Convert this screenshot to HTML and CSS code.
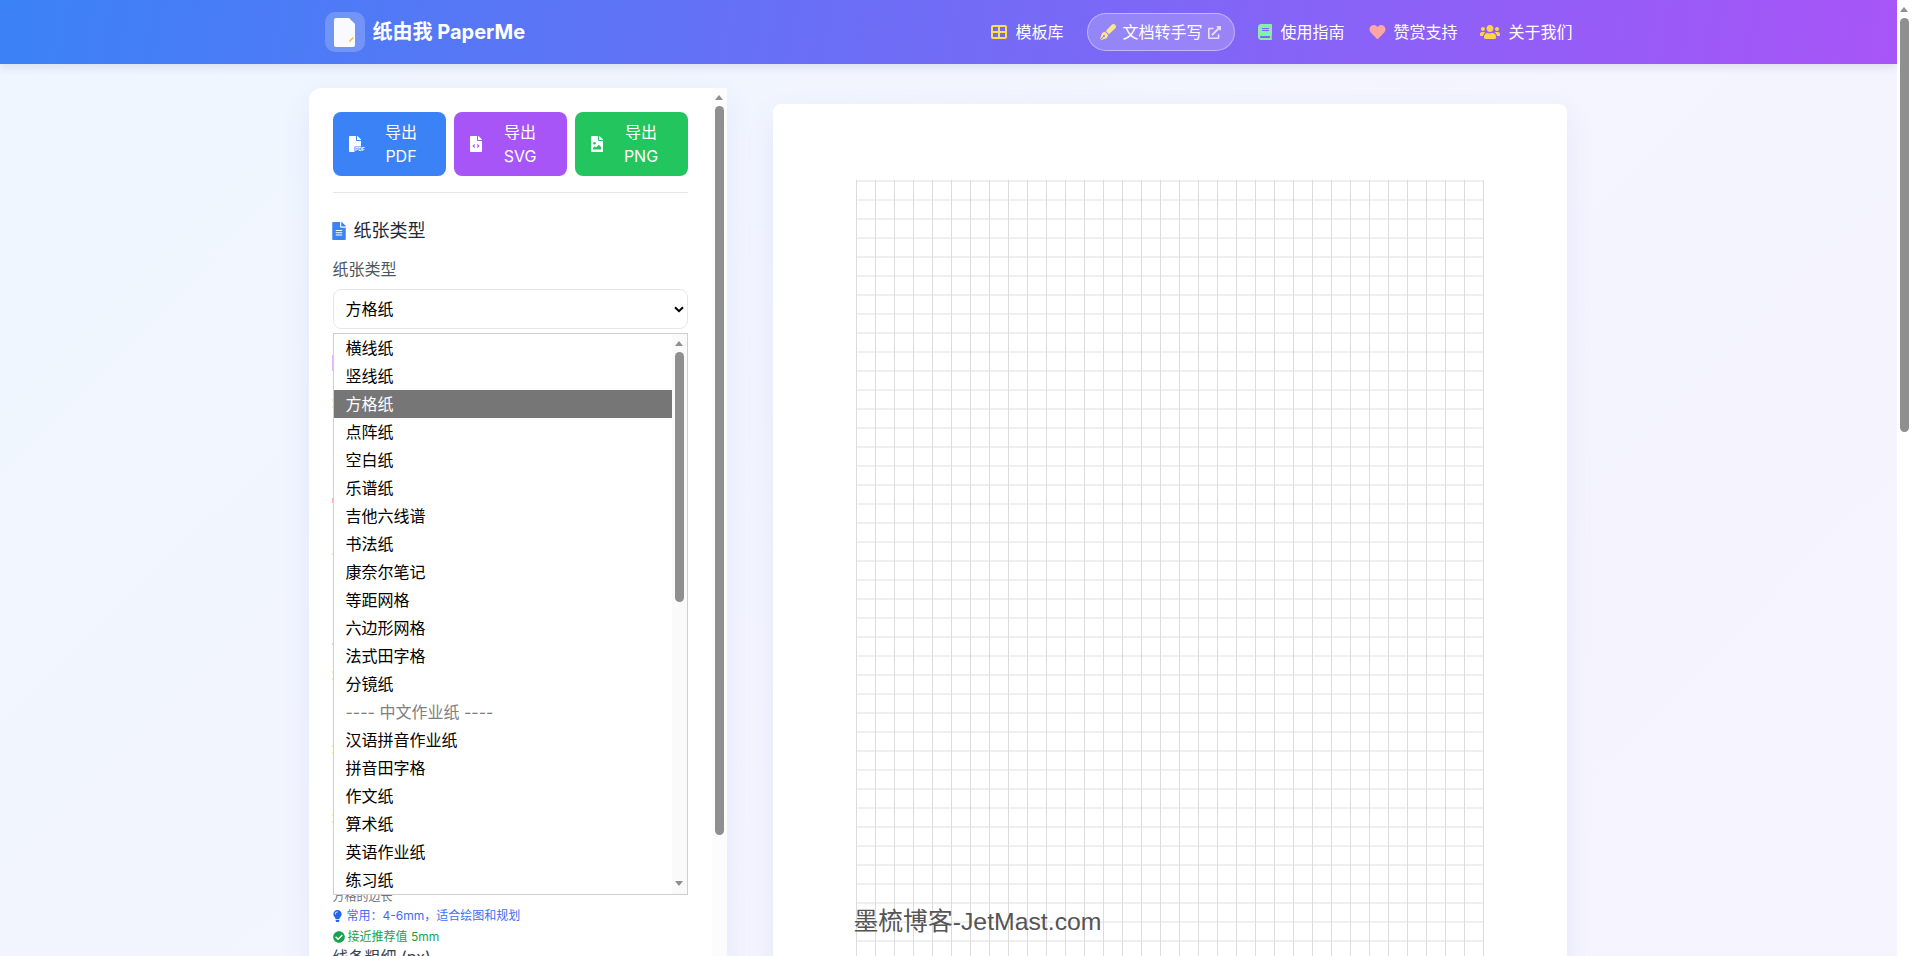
FILE: index.html
```html
<!DOCTYPE html>
<html lang="zh-CN">
<head>
<meta charset="utf-8">
<title>纸由我 PaperMe</title>
<link rel="stylesheet" href="styles.css">
</head>
<body>
<div class="page">
  <div class="viewport">
    <header class="topbar">
      <div class="topbar-inner">
        <a class="brand">
          <span class="brand-tile">
            <svg class="brand-sheet" viewBox="0 0 21 29"><path fill="#f8faff" d="M2 0h13l6 6v21a2 2 0 0 1-2 2H2a2 2 0 0 1-2-2V2a2 2 0 0 1 2-2z"/><path fill="#fbbf24" d="M15.4 22.4l3.4-3.4 1 1-3.4 3.4-1.4.4z"/></svg>
          </span>
          <span class="brand-name">纸由我 PaperMe</span>
        </a>
        <nav class="nav">
          <a class="nav-item"><svg class="ico ico-grid" viewBox="0 0 512 512"><path d="M448 96V224H288V96H448zm0 192V416H288V288H448zM224 224H64V96H224V224zM64 288H224V416H64V288zM64 32C28.7 32 0 60.7 0 96V416c0 35.3 28.7 64 64 64H448c35.3 0 64-28.7 64-64V96c0-35.3-28.7-64-64-64H64z"/></svg>模板库</a>
          <a class="nav-item nav-pill"><svg class="ico ico-pen" viewBox="0 0 512 512"><path d="M79.18 282.94a32.005 32.005 0 0 0-20.24 20.24L0 480l4.69 4.69 92.89-92.89c-.66-2.56-1.57-5.03-1.57-7.8 0-17.67 14.33-32 32-32s32 14.33 32 32-14.33 32-32 32c-2.77 0-5.24-.91-7.8-1.57l-92.89 92.89L32 512l176.82-58.94a31.983 31.983 0 0 0 20.24-20.24l33.07-84.07-98.88-98.88-84.07 33.07zM369.25 28.32L186.14 227.81l97.85 97.85 199.49-183.11C568.4 67.48 443.73-55.94 369.25 28.32z"/></svg>文档转手写<svg class="ico-ext" viewBox="0 0 512 512"><path d="M432,320H400a16,16,0,0,0-16,16V448H64V128H208a16,16,0,0,0,16-16V80a16,16,0,0,0-16-16H48A48,48,0,0,0,0,112V464a48,48,0,0,0,48,48H400a48,48,0,0,0,48-48V336A16,16,0,0,0,432,320ZM488,0h-128c-21.37,0-32.05,25.91-17,41l35.73,35.73L135,320.37a24,24,0,0,0,0,34L157.67,377a24,24,0,0,0,34,0L435.28,133.32,471,169c15,15,41,4.5,41-17V24A24,24,0,0,0,488,0Z"/></svg></a>
          <a class="nav-item"><svg class="ico ico-book" viewBox="0 0 448 512"><path d="M448 360V24c0-13.3-10.7-24-24-24H96C43 0 0 43 0 96v320c0 53 43 96 96 96h328c13.3 0 24-10.7 24-24v-16c0-7.5-3.5-14.3-8.9-18.7-4.2-15.4-4.2-59.3 0-74.7 5.4-4.3 8.9-11.1 8.9-18.6zM128 134c0-3.3 2.7-6 6-6h212c3.3 0 6 2.7 6 6v20c0 3.3-2.7 6-6 6H134c-3.3 0-6-2.7-6-6v-20zm0 64c0-3.3 2.7-6 6-6h212c3.3 0 6 2.7 6 6v20c0 3.3-2.7 6-6 6H134c-3.3 0-6-2.7-6-6v-20zm253.4 250H96c-17.7 0-32-14.3-32-32 0-17.6 14.4-32 32-32h285.4c-1.9 17.1-1.9 46.9 0 64z"/></svg>使用指南</a>
          <a class="nav-item nav-support"><svg class="ico ico-heart" viewBox="0 0 512 512"><path d="M462.3 62.6C407.5 15.9 326 24.3 275.7 76.2L256 96.5l-19.7-20.3C186.1 24.3 104.5 15.9 49.7 62.6c-62.8 53.6-66.1 149.8-9.9 207.9l193.5 199.8c12.5 12.9 32.8 12.9 45.3 0l193.5-199.8c56.3-58.1 53-154.3-9.8-207.9z"/></svg>赞赏支持</a>
          <a class="nav-item"><svg class="ico ico-users" viewBox="0 0 640 512"><path d="M96 224c35.3 0 64-28.7 64-64s-28.7-64-64-64-64 28.7-64 64 28.7 64 64 64zm448 0c35.3 0 64-28.7 64-64s-28.7-64-64-64-64 28.7-64 64 28.7 64 64 64zm32 32h-64c-17.6 0-33.5 7.1-45.1 18.6 40.3 22.1 68.9 62 75.1 109.4h66c17.7 0 32-14.3 32-32v-32c0-35.3-28.7-64-64-64zm-256 0c61.9 0 112-50.1 112-112S381.9 32 320 32 208 82.1 208 144s50.1 112 112 112zm76.8 32h-8.3c-20.8 10-43.9 16-68.5 16s-47.6-6-68.5-16h-8.3C179.6 288 128 339.6 128 403.2V432c0 26.5 21.5 48 48 48h288c26.5 0 48-21.5 48-48v-28.8c0-63.6-51.6-115.2-115.2-115.2zm-223.7-13.4C161.5 263.1 145.6 256 128 256H64c-35.3 0-64 28.7-64 64v32c0 17.7 14.3 32 32 32h65.9c6.3-47.4 34.9-87.3 75.2-109.4z"/></svg>关于我们</a>
        </nav>
      </div>
    </header>

    <main class="workspace">
      <aside class="sidebar">
        <div class="sidebar-body">
          <div class="exports">
            <button class="export export-pdf">
              <svg class="export-ico-wide" viewBox="0 0 512 512"><path fill="#fff" d="M224 136V0H24C10.7 0 0 10.7 0 24v464c0 13.3 10.7 24 24 24h336c13.3 0 24-10.7 24-24V160H248c-13.2 0-24-10.8-24-24zm160-14.1v6.1H256V0h6.1c6.4 0 12.5 2.5 17 7l97.9 98c4.5 4.5 7 10.6 7 16.9z"/><rect x="176" y="336" width="336" height="176" fill="#3b82f6"/><text x="192" y="490" class="pdf-tag" textLength="316" lengthAdjust="spacingAndGlyphs">PDF</text></svg>
              <span class="export-label">导出 PDF</span>
            </button>
            <button class="export export-svg">
              <svg class="export-ico" viewBox="0 0 384 512"><path fill="#fff" d="M224 136V0H24C10.7 0 0 10.7 0 24v464c0 13.3 10.7 24 24 24h336c13.3 0 24-10.7 24-24V160H248c-13.2 0-24-10.8-24-24zm160-14.1v6.1H256V0h6.1c6.4 0 12.5 2.5 17 7l97.9 98c4.5 4.5 7 10.6 7 16.9z"/><path fill="none" stroke="#a855f7" stroke-width="34" d="M150 272l-50 48 50 48M234 272l50 48-50 48"/></svg>
              <span class="export-label">导出 SVG</span>
            </button>
            <button class="export export-png">
              <svg class="export-ico" viewBox="0 0 384 512"><path fill="#fff" d="M224 136V0H24C10.7 0 0 10.7 0 24v464c0 13.3 10.7 24 24 24h336c13.3 0 24-10.7 24-24V160H248c-13.2 0-24-10.8-24-24zm160-14.1v6.1H256V0h6.1c6.4 0 12.5 2.5 17 7l97.9 98c4.5 4.5 7 10.6 7 16.9z"/><circle cx="112" cy="230" r="40" fill="#22c55e"/><path fill="#22c55e" d="M64 432v-48l56-56 40 40 88-88 72 72v80z"/></svg>
              <span class="export-label">导出 PNG</span>
            </button>
          </div>
          <hr class="rule">
          <h2 class="section-title"><svg class="section-ico" viewBox="0 0 384 512"><path d="M224 136V0H24C10.7 0 0 10.7 0 24v464c0 13.3 10.7 24 24 24h336c13.3 0 24-10.7 24-24V160H248c-13.2 0-24-10.8-24-24zm64 236c0 6.6-5.4 12-12 12H108c-6.6 0-12-5.4-12-12v-8c0-6.6 5.4-12 12-12h168c6.6 0 12 5.4 12 12v8zm0-64c0 6.6-5.4 12-12 12H108c-6.6 0-12-5.4-12-12v-8c0-6.6 5.4-12 12-12h168c6.6 0 12 5.4 12 12v8zm0-72v8c0 6.6-5.4 12-12 12H108c-6.6 0-12-5.4-12-12v-8c0-6.6 5.4-12 12-12h168c6.6 0 12 5.4 12 12zm96-114.1v6.1H256V0h6.1c6.4 0 12.5 2.5 17 7l97.9 98c4.5 4.5 7 10.6 7 16.9z"/></svg>纸张类型</h2>
          <div class="field-label">纸张类型</div>
          <div class="combo">
            <div class="combo-box" role="combobox" aria-expanded="true">方格纸<svg class="combo-chevron" viewBox="0 0 10 7"><path d="M1 1.2l4 4 4-4" fill="none" stroke="#000" stroke-width="2"/></svg></div>
            <div class="combo-menu" role="listbox">
              <ul class="combo-list">
                <li>横线纸</li>
                <li>竖线纸</li>
                <li class="is-selected">方格纸</li>
                <li>点阵纸</li>
                <li>空白纸</li>
                <li>乐谱纸</li>
                <li>吉他六线谱</li>
                <li>书法纸</li>
                <li>康奈尔笔记</li>
                <li>等距网格</li>
                <li>六边形网格</li>
                <li>法式田字格</li>
                <li>分镜纸</li>
                <li class="is-disabled">---- 中文作业纸 ----</li>
                <li>汉语拼音作业纸</li>
                <li>拼音田字格</li>
                <li>作文纸</li>
                <li>算术纸</li>
                <li>英语作业纸</li>
                <li>练习纸</li>
              </ul>
              <div class="sb sb-menu"><i class="sb-up"></i><b class="sb-thumb"></b><i class="sb-down"></i></div>
            </div>
            <div class="under-menu">
              <i class="edge edge-purple"></i>
              <i class="edge edge-yellow edge-a"></i>
              <i class="edge edge-yellow edge-b"></i>
              <i class="edge edge-red"></i>
              <i class="edge edge-orange"></i>
              <i class="edge edge-pink"></i>
              <i class="edge edge-yellow edge-c"></i>
              <i class="edge edge-yellow edge-b"></i>
              <i class="edge edge-yellow edge-d"></i>
              <i class="edge edge-yellow edge-b"></i>
              <i class="edge edge-yellow edge-e"></i>
              <i class="edge edge-yellow edge-b"></i>
            </div>
          </div>
          <div class="hint">方格的边长</div>
          <div class="tip tip-blue"><svg class="tip-bulb" viewBox="0 0 352 512"><path d="M96.06 454.35c.01 6.29 1.87 12.45 5.36 17.69l17.09 25.69a31.99 31.99 0 0 0 26.64 14.28h61.71a31.99 31.99 0 0 0 26.64-14.28l17.09-25.69a31.989 31.989 0 0 0 5.36-17.69l.04-38.35H96.01l.05 38.35zM0 176c0 44.37 16.45 84.85 43.56 115.78 16.52 18.85 42.36 58.23 52.21 91.45.04.26.07.52.11.78h160.24c.04-.26.07-.51.11-.78 9.85-33.22 35.69-72.6 52.21-91.45C335.55 260.85 352 220.37 352 176 352 78.61 272.91-.3 175.45 0 73.44.31 0 82.97 0 176zm176-80c-44.11 0-80 35.89-80 80 0 8.84-7.16 16-16 16s-16-7.16-16-16c0-61.76 50.24-112 112-112 8.84 0 16 7.16 16 16s-7.16 16-16 16z"/></svg>常用：4-6mm，适合绘图和规划</div>
          <div class="tip tip-green"><svg class="tip-check" viewBox="0 0 512 512"><path d="M504 256c0 136.967-111.033 248-248 248S8 392.967 8 256 119.033 8 256 8s248 111.033 248 248zM227.314 387.314l184-184c6.248-6.248 6.248-16.379 0-22.627l-22.627-22.627c-6.248-6.249-16.379-6.249-22.628 0L216 308.118l-70.059-70.059c-6.248-6.248-16.379-6.248-22.628 0l-22.627 22.627c-6.248 6.248-6.248 16.379 0 22.627l104 104c6.249 6.249 16.379 6.249 22.628.001z"/></svg>接近推荐值 5mm</div>
          <div class="field-label field-label-tight">线条粗细 (px)</div>
        </div>
        <div class="sb sb-side"><i class="sb-up"></i><b class="sb-thumb"></b></div>
      </aside>

      <section class="preview">
        <div class="paper">
          <div class="sheet"></div>
          <div class="watermark">墨梳博客-JetMast.com</div>
        </div>
      </section>
    </main>
  </div>
  <div class="sb sb-page"><i class="sb-up"></i><b class="sb-thumb"></b></div>
</div>
</body>
</html>
```
FILE: styles.css
```css
* { box-sizing: border-box; }
html, body { margin: 0; height: 100%; overflow: hidden; }
body {
  font-family: Inter, "Noto Sans CJK SC", sans-serif;
  font-size: 16px;
  line-height: 24px;
  color: #1f2937;
  background: #fff;
}
.page { display: grid; grid-template-columns: 1fr 15px; height: 956px; overflow: hidden; }
.viewport {
  height: 956px;
  overflow: hidden;
  background: linear-gradient(135deg, #eff6ff 0%, #f5f4fe 75%, #f6f4ff 100%);
}

/* Top bar */
.topbar {
  position: relative;
  z-index: 2;
  height: 64px;
  background: linear-gradient(100deg, #3b82f6 0%, #a855f7 100%);
  box-shadow: 0 4px 8px rgba(40, 50, 120, .1);
  color: #fff;
}
.topbar-inner {
  max-width: 1280px;
  height: 64px;
  margin: 0 auto;
  padding: 0 16px;
  display: flex;
  align-items: center;
  justify-content: space-between;
}
.brand { display: flex; align-items: center; gap: 8px; }
.brand-tile {
  width: 40px; height: 40px;
  display: flex; align-items: center; justify-content: center;
  border-radius: 10px;
  background: rgba(255, 255, 255, .2);
}
.brand-sheet { width: 21px; height: 29px; display: block; }
.brand-name { font-size: 20px; font-weight: 700; line-height: 28px; }
.nav { display: flex; align-items: center; gap: 23px; }
.nav-item { display: flex; align-items: center; gap: 8px; white-space: nowrap; color: #fff; }
.nav-support { margin-left: 2px; gap: 7px; }
.nav-pill {
  height: 38px;
  margin-left: 1px;
  padding: 0 13px 0 12px;
  gap: 6px;
  border: 1px solid rgba(255, 255, 255, .4);
  border-radius: 19px;
  background: rgba(255, 255, 255, .2);
}
.ico { height: 16px; display: block; flex: none; }
.ico-grid { width: 16px; fill: #fde047; }
.ico-pen { width: 16px; fill: #fde68a; }
.ico-book { width: 14px; fill: #86efac; }
.ico-heart { width: 17px; fill: #fca5a5; }
.ico-users { width: 20px; fill: #fcd34d; }
.ico-ext { display: block; width: 13px; height: 13px; fill: rgba(255, 255, 255, .75); flex: none; }

/* Layout */
.workspace {
  max-width: 1280px;
  margin: 0 auto;
  padding-top: 24px;
  display: grid;
  grid-template-columns: 418px 1fr;
  gap: 24px;
  align-items: start;
}

/* Sidebar */
.sidebar {
  height: 1000px;
  display: grid;
  grid-template-columns: 1fr 15px;
  overflow: hidden;
  border-radius: 12px 0 0 12px;
  background: #fff;
  box-shadow: 0 10px 30px rgba(70, 80, 190, .08);
}
.sidebar-body { padding: 24px; min-width: 0; }
.exports { display: grid; grid-template-columns: repeat(3, 1fr); gap: 8px; }
.export {
  height: 64px;
  padding: 0 16px;
  display: flex;
  align-items: center;
  gap: 8px;
  border: 0;
  border-radius: 8px;
  color: #fff;
  font: inherit;
}
.export-pdf { background: #3b82f6; }
.export-svg { background: #a855f7; }
.export-png { background: #22c55e; }
.export-ico { width: 12px; height: 16px; flex: none; }
.export-ico-wide { width: 16px; height: 16px; flex: none; }
.export-label { flex: 1; min-width: 0; text-align: center; }
.pdf-tag { font-family: "Liberation Sans", sans-serif; font-weight: 700; font-size: 170px; fill: #fff; }
.rule { height: 1px; margin: 16px 0 0; border: 0; background: #e5e7eb; }
.section-title {
  margin: 24px 0 0;
  display: flex;
  align-items: center;
  gap: 8px;
  font-size: 18px;
  font-weight: 400;
  line-height: 28px;
  color: #1f2937;
}
.section-ico { width: 14px; height: 18px; flex: none; fill: #3b82f6; margin-left: -1px; }
.field-label { margin-top: 12px; color: #4b5563; }
.field-label-tight { margin-top: 0; color: #374151; }

/* Combo */
.combo { position: relative; margin-top: 8px; }
.combo-box {
  height: 40px;
  padding: 0 12px;
  display: flex;
  align-items: center;
  justify-content: space-between;
  border: 1px solid #e5e7eb;
  border-radius: 8px;
  background: #fff;
  color: #000;
}
.combo-chevron { width: 10px; height: 7px; display: block; margin-right: -9px; }
.combo-menu {
  position: absolute;
  z-index: 3;
  left: 0; right: 0; top: 44px;
  height: 562px;
  display: grid;
  grid-template-columns: 1fr 15px;
  overflow: hidden;
  border: 1px solid #cfcfcf;
  background: #fff;
}
.combo-list { margin: 0; padding: 0; list-style: none; color: #000; }
.combo-list li { height: 28px; padding: 0 12px; line-height: 28px; white-space: nowrap; }
.combo-list .is-selected { background: #767676; color: #fff; }
.combo-list .is-disabled { color: #808080; }

/* Edges of the controls hidden behind the open menu */
.under-menu {
  height: 560px;
  padding-top: 26px;
  display: flex;
  flex-direction: column;
  align-items: flex-start;
}
.edge { display: block; width: 1px; height: 2px; margin-left: -1px; flex: none; }
.edge-purple { height: 16px; background: #e2b4fc; }
.edge-yellow { background: #fde9a8; }
.edge-red { height: 5px; margin-top: 90px; background: #fdb4b4; }
.edge-orange { margin-top: 50px; background: #fbe0c0; }
.edge-pink { margin-top: 88px; background: #efc6f8; }
.edge-a { margin-top: 28px; }
.edge-b { margin-top: 5px; }
.edge-c { margin-top: 26px; }
.edge-d { margin-top: 65px; }
.edge-e { margin-top: 60px; }

.hint { height: 16px; font-size: 12px; line-height: 16px; color: #6b7280; }
.tip {
  display: flex;
  align-items: center;
  gap: 3px;
  font-size: 12px;
  line-height: 16px;
}
.tip-blue { margin-top: 3px; color: #3b6ef6; gap: 5px; }
.tip-green { margin-top: 5px; color: #16a34a; }
.tip-bulb { width: 9px; height: 12px; flex: none; fill: #2563eb; }
.tip-check { width: 12px; height: 12px; flex: none; fill: #16a34a; }

/* Scrollbars */
.sb { position: relative; display: flex; flex-direction: column; align-items: center; width: 15px; }
.sb-side { background: #fcfcfc; }
.sb-menu { background: #fafafa; height: 100%; }
.sb-page { background: #fff; height: 956px; }
.sb-up, .sb-down { display: block; width: 9px; height: 18px; flex: none; position: relative; }
.sb-up::before, .sb-down::before {
  content: "";
  position: absolute;
  left: 0;
  border-left: 4.5px solid transparent;
  border-right: 4.5px solid transparent;
}
.sb-up::before { top: 7px; border-bottom: 5px solid #8f8f8f; }
.sb-down { margin-top: auto; }
.sb-down::before { top: 5px; border-top: 5px solid #8f8f8f; }
.sb-thumb { display: block; width: 9px; flex: none; border-radius: 4.5px; background: #8f8f8f; }
.sb-page .sb-thumb { height: 414px; }
.sb-side .sb-thumb { height: 729px; }
.sb-menu .sb-thumb { height: 250px; }

/* Preview */
.preview { padding-top: 16px; }
.paper {
  position: relative;
  width: 794px;
  height: 1123px;
  margin: 0 auto;
  padding: 76px 83px;
  border-radius: 8px;
  background: #fff;
  box-shadow: 0 10px 30px rgba(70, 80, 190, .08);
}
.sheet {
  width: 628px;
  height: 971px;
  background-image:
    linear-gradient(90deg, #dcdcdc 1px, transparent 1px),
    linear-gradient(#f0f0f0 2px, transparent 2px);
  background-size: 19px 19px;
}
.watermark {
  position: absolute;
  left: 81px;
  top: 802px;
  font-family: "Liberation Sans", "Noto Sans CJK SC", sans-serif;
  font-size: 24.8px;
  line-height: 32px;
  color: #555;
  white-space: nowrap;
}
```
